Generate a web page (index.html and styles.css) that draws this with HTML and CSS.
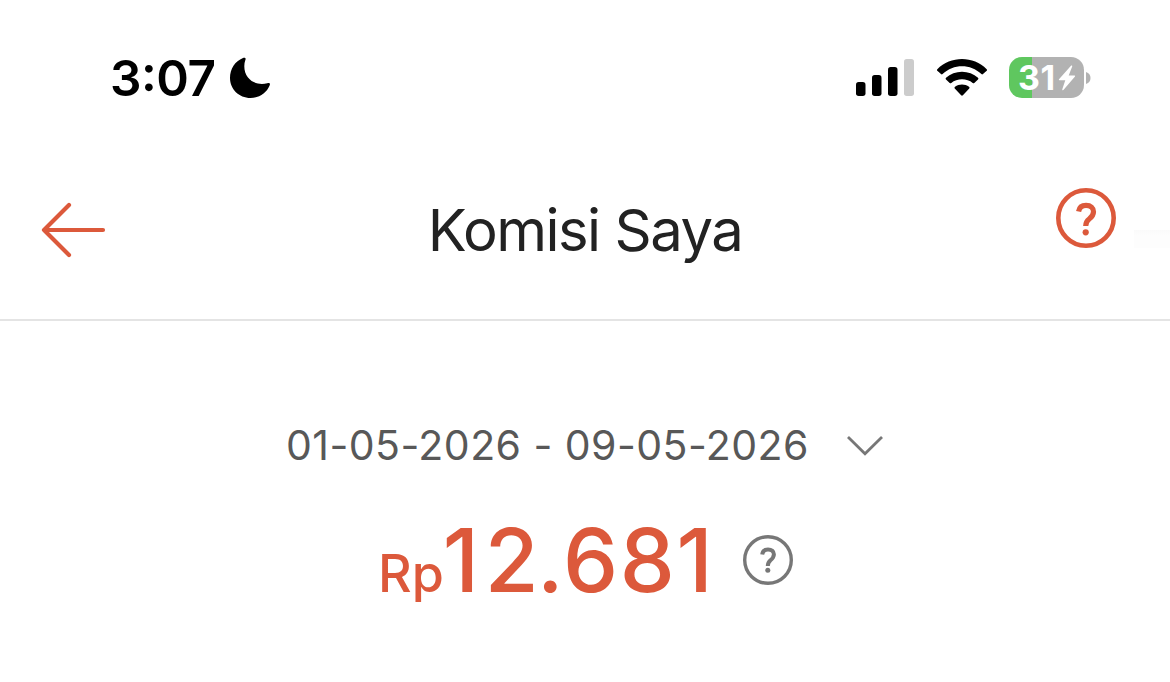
FILE: index.html
```html
<!DOCTYPE html>
<html lang="id">
<head>
<meta charset="utf-8">
<title>Komisi Saya</title>
<link rel="stylesheet" href="styles.css">
</head>
<body>
<div class="status">
  <div class="status-left">
    <span class="time">3:07</span>
    <svg class="moon" width="42" height="42" viewBox="0 0 42 42"><path d="M14 1C16.200 0.300 17.200 1.300 16.300 3.300C14.500 8 15 15.500 19 20.500C23.500 26.300 31.500 28.200 38.300 26.200C40.600 25.500 41.500 26.600 40.600 28.600C37.600 36 30.500 41 21.500 41C10 41 1 32 1 21C1 12 6 4.200 14 1Z"/></svg>
  </div>
  <div class="status-right">
    <svg width="58" height="42" viewBox="0 0 58 42"><rect x="0" y="25" width="9.500" height="14" rx="2.700"/><rect x="16" y="18" width="9.500" height="21" rx="2.700"/><rect x="32" y="10" width="9.500" height="29" rx="2.700"/><rect x="48" y="2" width="10" height="37" rx="2.700" fill="#ccc"/></svg>
    <svg class="wifi" width="52" height="42" viewBox="0 0 52 42"><path d="M1.300 12.200C14.500-1.300 37.500-1.300 50.700 12.200Q51.400 13 50.700 13.800L47 17.100Q46.200 17.800 45.400 17.100C34.500 6.600 17.500 6.600 6.600 17.100Q5.800 17.800 5 17.100L1.300 13.800Q.6 13 1.300 12.200Z"/><path d="M10 20.700C18.500 12.700 33.500 12.700 42 20.700Q42.900 21.600 42 22.500L38.300 26Q37.500 26.700 36.700 26C31 21 21 21 15.300 26Q14.500 26.700 13.700 26L10 22.500Q9.100 21.600 10 20.700Z"/><path d="M19 29.700C23 26.600 29 26.600 33 29.700Q34 30.500 33.200 31.400L26.900 38.200Q26 39.100 25.100 38.200L18.800 31.400Q18 30.500 19 29.700Z"/></svg>
    <div class="battery"><span class="level">31</span><svg class="bolt" width="18" height="26" viewBox="0 0 18 26"><path d="M13.200.6L1 14.300Q.4 15.200 1.500 15.200H7.300L4.300 24.200Q4 26 5.400 25L17 11.400Q17.500 10.500 16.500 10.500H10.700L14.200 1.400Q14.400 0 13.200.6Z"/></svg></div>
    <svg class="nub" width="5" height="12" viewBox="0 0 5 12"><path d="M0 0Q4.500 1.500 4.500 6Q4.500 10.500 0 12Z"/></svg>
  </div>
</div>
<header class="header">
  <svg class="back" width="66" height="58" viewBox="0 0 66 58"><path d="M29 4L4 29L29 54M4 29H63"/></svg>
  <h1 class="title">Komisi Saya</h1>
  <div class="header-end">
    <svg class="help" width="60" height="60" viewBox="0 0 60 60"><circle cx="30" cy="30" r="27.700"/><path class="mark" d="M22.600 23.500C23.300 19.200 26 17.400 30 17.400C34.800 17.400 37.500 19.900 37.500 23.700C37.500 27.300 35.800 29 33.200 31C30.600 33 29.700 34.500 29.700 38"/><circle class="dot" cx="29.700" cy="44.300" r="3.100"/></svg>
    <span class="smudge"></span>
  </div>
</header>
<main class="summary">
  <div class="period">
    <span class="dates">01-05-2026 - 09-05-2026</span>
    <svg class="chevron" width="38" height="24" viewBox="0 0 38 24"><path d="M2 4L19 20.800L36 4"/></svg>
  </div>
  <div class="amount">
    <div class="money"><span class="currency">Rp</span><span class="value"><span class="lead">1</span><span class="thousands">2</span>.681</span></div>
    <svg class="info" width="50" height="50" viewBox="0 0 50 50"><circle cx="25" cy="25" r="23.300"/><path class="mark" d="M19.200 19.500C19.700 16 22 14.400 25 14.400C28.700 14.400 30.900 16.400 30.900 19.300C30.900 22.300 29.500 23.700 27.500 25.300C25.500 27 24.800 28.200 24.800 31"/><circle class="dot" cx="24.800" cy="35.300" r="2.500"/></svg>
  </div>
</main>
</body>
</html>
```
FILE: styles.css
```css
* { box-sizing: border-box; }
body { margin: 0; background: #fff; font-family: Inter, "Liberation Sans", sans-serif; white-space: nowrap; }
svg { display: block; flex: none; }
.status { display: flex; justify-content: space-between; align-items: center; height: 156px; padding: 0 79px 0 110px; }
.status-left, .status-right { display: flex; align-items: center; }
.time { width: 119px; font-size: 49.5px; font-weight: 600; line-height: 60px; letter-spacing: -0.5px; font-feature-settings: "case" 1; }
.wifi { margin-left: 22px; }
.battery { display: flex; align-items: center; width: 75px; height: 41px; margin: 0 0 1px 21.500px; padding-left: 9px; border-radius: 13px; background: linear-gradient(90deg, #5fc75f 23px, #b2b2b2 23px); color: #fff; }
.level { width: 40px; font-size: 34px; font-weight: 700; line-height: 41px; letter-spacing: 0.5px; }
.bolt { fill: #fff; }
.nub { margin: 0 0 1px 2px; fill: #b2b2b2; }
.header { display: grid; grid-template-columns: 1fr auto 1fr; align-items: center; height: 165px; padding-bottom: 15px; border-bottom: 2px solid #e4e4e4; }
.back { margin-left: 40px; fill: none; stroke: #dc593b; stroke-width: 4.200; stroke-linecap: round; stroke-linejoin: round; }
.title { margin: 0; color: #222; font-size: 58px; font-weight: 400; line-height: 72px; letter-spacing: -1.5px; }
.header-end { display: flex; justify-content: flex-end; align-items: center; }
.help { margin: 0 18px 24px 0; fill: none; stroke: #dc593b; stroke-width: 4.600; }
.help .mark { stroke-width: 5.200; }
.help .dot { fill: #dc593b; stroke: none; }
.smudge { width: 36px; height: 18px; margin-top: 18px; background: linear-gradient(#fafafa, #fdfdfd 6px); }
.summary { display: flex; flex-direction: column; padding-top: 94px; }
.period { display: flex; align-items: center; height: 60px; padding-left: 286px; color: #585858; }
.dates { width: 560px; font-size: 41px; line-height: 60px; letter-spacing: 0.45px; }
.chevron { fill: none; stroke: #777; stroke-width: 2.800; }
.amount { display: flex; align-items: center; height: 110px; margin-top: 30px; padding-left: 378px; }
.money { display: flex; align-items: baseline; width: 365px; color: #dc593b; font-weight: 500; line-height: 110px; }
.currency { font-size: 52px; line-height: 60px; }
.value { margin-left: -1px; font-size: 87.5px; letter-spacing: 1.7px; }
.value .lead { letter-spacing: 5.5px; }
.value .thousands { letter-spacing: -1.5px; }
.info { fill: none; stroke: #777; stroke-width: 3.400; }
.info .mark { stroke-width: 4; }
.info .dot { fill: #777; stroke: none; }
```
